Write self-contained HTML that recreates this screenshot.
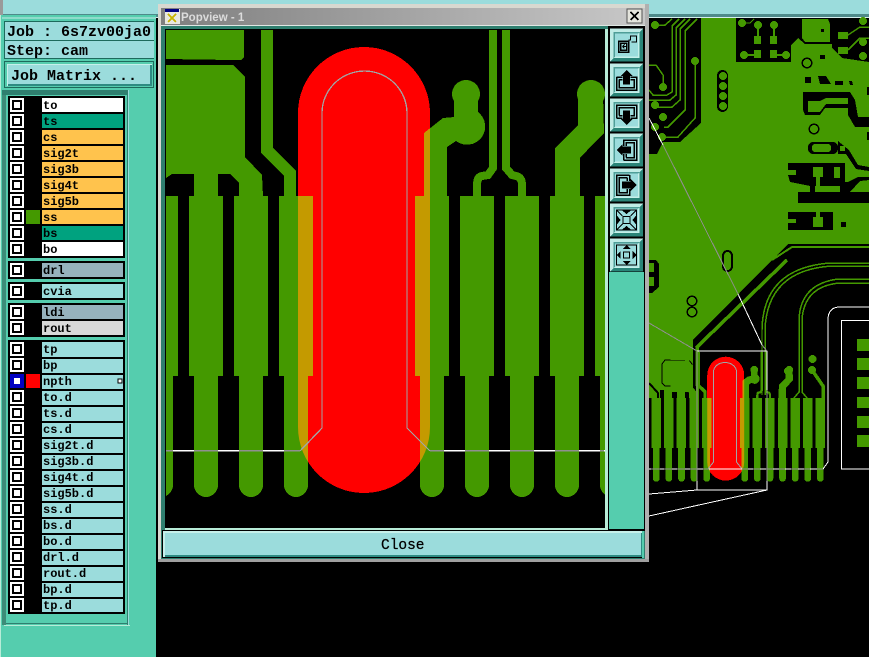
<!DOCTYPE html>
<html><head><meta charset="utf-8"><style>
html,body{margin:0;padding:0;background:#000;width:869px;height:657px;overflow:hidden}
svg{display:block}
text{font-family:"Liberation Mono",monospace;fill:#000}
.l{font-size:12px;font-weight:bold}
.h{font-size:15px;font-weight:bold}
</style></head><body>
<svg width="869" height="657" viewBox="0 0 869 657" xmlns="http://www.w3.org/2000/svg" shape-rendering="crispEdges">
<defs>
<g id="cb"><rect x="10" y="-7" width="14" height="14" fill="#fff"/><rect x="12" y="-5" width="10" height="10" fill="#000"/><rect x="14" y="-3" width="6" height="6" fill="#fff"/></g>
<path id="pad" d="M-17,196H17V376H12V485A12,12 0 0 1 -12,485V376H-17Z"/>
<g id="shapes">
<path d="M166,30H244V57L241,60H232L166,59Z"/>
<path d="M166,65H233L245,77V157L262,175L263,196H239V183L230,174H218V196H194V174H172L166,178Z"/>
<path d="M261,30H273V148L296,171V196H284V176L261,153Z"/>
<path d="M424,196V133L443,118L454,117V100H478V112A14,14 0 1 1 456,141L447,147V196Z"/>
<circle cx="466" cy="94" r="14"/>
<circle cx="591" cy="94" r="14"/>
<path d="M555,196V148L578,125V94H603L604,133L594,143L580,158V196Z"/>
</g>
<g id="tr" fill="none" stroke="currentColor" stroke-width="8">
<path d="M493,30V168L488,175L482,176Q477,177 477,185V196"/>
<path d="M506,30V168L512,175L516,176Q522,177 522,185V196"/>
</g>
<g id="pads">
<use href="#pad" x="116"/><use href="#pad" x="161"/><use href="#pad" x="206"/><use href="#pad" x="251"/><use href="#pad" x="296"/><use href="#pad" x="432"/><use href="#pad" x="477"/><use href="#pad" x="522"/><use href="#pad" x="567"/><use href="#pad" x="612"/><use href="#pad" x="657"/><use href="#pad" x="702"/>
</g>
<clipPath id="cap"><rect x="298" y="47" width="132" height="446" rx="66" ry="66"/></clipPath>
<clipPath id="cv"><rect x="166" y="30" width="439" height="497"/></clipPath>
<g id="scene">
<rect x="298" y="47" width="132" height="446" rx="66" ry="66" fill="#f00"/>
<g fill="#449900" color="#449900"><use href="#shapes"/><use href="#tr"/><use href="#pads"/></g>
<g clip-path="url(#cap)" fill="#c49a00"><use href="#shapes"/><use href="#pads"/></g>
</g>
<g id="arrowU">
<path d="M-10,-3H-4M4,-3H10V10H-10V-3M-7.5,-.5H-4M4,-.5H7.5V7.5H-7.5V-.5" fill="none" stroke="#000" stroke-width="1.5"/>
<path d="M0,-10L6,-4H3.5V4.5H-3.5V-4H-6Z" fill="#000"/>
</g>
<g id="btn">
<rect x="-16.5" y="-16.5" width="33" height="33" fill="#9bdcdc"/>
<path d="M-16.5,-16.5H16.5L13,-13H-13V13L-16.5,16.5Z" fill="#c0ece6"/>
<path d="M16.5,16.5H-16.5L-13,13H13V-13L16.5,-16.5Z" fill="#2a8478"/>
<path d="M-13,-13H13L11.5,-11.5H-11.5V11.5L-13,13Z" fill="#4f9e98"/>
<path d="M13,13H-13L-11.5,11.5H11.5V-11.5L13,-13Z" fill="#c6f0ea"/>
</g>
</defs>

<!-- background -->
<rect width="869" height="657" fill="#000"/>
<rect y="0" width="869" height="14" fill="#9bdcdc"/>
<rect y="14" width="869" height="3" fill="#4f8a8a"/>
<rect y="17" width="869" height="1" fill="#d4eeee"/>
<rect x="0" width="3" height="15" fill="#9a9a9a"/>

<!-- PCB background -->
<path d="M649,18H869V244H788L693,340V398H649Z" fill="#449900"/>
<path d="M649,18H701V123L680,142H663L657,154H649Z" fill="#000"/>
<g fill="none" stroke="#449900" stroke-width="1.5">
<path d="M697,19L685,31V110L668,127H664"/>
<path d="M690,19L680,29V100L672,107H655"/>
<path d="M685,19L676,28V95L670,100H649"/>
<path d="M679,19L672,26V92L667,95H653L649,90"/>
<path d="M649,65H656L663,75V87"/>
<path d="M695,61V118L678,137H662"/>
<path d="M655,25H665L672,19"/>
</g>
<g fill="#449900"><circle cx="655" cy="25" r="4"/><circle cx="695" cy="61" r="4"/><circle cx="663" cy="87" r="4"/><circle cx="655" cy="105" r="4"/><circle cx="663" cy="117" r="4"/><circle cx="655" cy="127" r="4"/><circle cx="662" cy="137" r="4"/></g>
<path d="M736,18H869V62L842,58L832,48V44H805L798,38L791,45V62H736Z" fill="#000"/>
<path d="M802,19H828L830,24V42H805L802,38Z" fill="#449900"/>
<rect x="821" y="29" width="3" height="3" fill="#000"/>
<rect x="820" y="55" width="5" height="4" fill="#000"/>
<g fill="#449900">
<circle cx="742" cy="23" r="4"/><path d="M742,23H750L754,19" stroke="#449900" fill="none"/>
<circle cx="758" cy="25" r="4"/><rect x="757" y="27" width="2" height="12"/><rect x="754" y="36" width="7" height="8"/>
<circle cx="774" cy="25" r="4"/><rect x="773" y="27" width="2" height="12"/><rect x="770" y="36" width="7" height="8"/>
<circle cx="744" cy="55" r="4"/><rect x="744" y="54" width="12" height="2"/><rect x="754" y="50" width="7" height="8"/>
<rect x="770" y="50" width="7" height="8"/><rect x="775" y="54" width="11" height="2"/><circle cx="786" cy="55" r="4"/>
<rect x="838" y="32" width="10" height="7"/><rect x="838" y="47" width="10" height="7"/>
<circle cx="863" cy="42" r="4"/><circle cx="863" cy="56" r="4"/><circle cx="863" cy="21" r="4"/>
</g>
<path d="M848,35L860,27H869M848,50L860,38L869,38" fill="none" stroke="#449900" stroke-width="1.5"/>
<circle cx="807" cy="63" r="5.5" fill="#000"/><circle cx="807" cy="63" r="4" fill="#449900"/>
<circle cx="814" cy="129" r="5.5" fill="#000"/><circle cx="814" cy="129" r="4" fill="#449900"/>
<rect x="717" y="70" width="11" height="42" rx="5.5" fill="#000"/>
<g fill="#449900"><circle cx="723" cy="76" r="4"/><circle cx="723" cy="86" r="4"/><circle cx="723" cy="96" r="4"/><circle cx="723" cy="106" r="4"/></g>
<!-- middle right dark -->
<path d="M805,77H811V83H805ZM818,76H826L831,84H820ZM835,81H843V85H835ZM849,81H852L853,85H850Z" fill="#000"/>
<path d="M803,92L850,92L855,100L858,117H869V127H855L848,115V108H825L820,115H805L803,110Z" fill="#000"/>
<path d="M808,101H820L826,98H848V104H826L820,112H808Z" fill="#449900"/>
<rect x="867" y="87" width="2" height="8" fill="#000"/><rect x="867" y="132" width="2" height="8" fill="#000"/>
<rect x="808" y="142" width="30" height="12" rx="5" fill="#000"/><rect x="812" y="144" width="19" height="8" rx="3" fill="#449900"/>
<path d="M838,141L849,150L858,165L869,167V171L856,169L846,154L838,154Z" fill="#000"/>
<rect x="840" y="146" width="5" height="5" fill="#449900"/>
<path d="M788,163H845V182H848L858,177L869,177V180L860,181L850,192H869V203H798V192H810V186L790,182L788,175Z" fill="#000"/>
<g fill="#449900"><rect x="813" y="167" width="10" height="10"/><rect x="816" y="176" width="4" height="12"/><rect x="834" y="167" width="6" height="11"/><rect x="815" y="186" width="25" height="6"/><rect x="788" y="170" width="8" height="5"/></g>
<path d="M788,212H833V230H788Z" fill="#000"/>
<g fill="#449900"><rect x="813" y="217" width="10" height="10"/><rect x="816" y="203" width="4" height="15"/><rect x="834" y="203" width="7" height="8"/><rect x="788" y="219" width="8" height="4"/><rect x="841" y="203" width="28" height="4"/></g>
<rect x="841" y="222" width="5" height="5" fill="#000"/>
<!-- diag trace and lower traces -->
<path d="M787,260L697,347V400" fill="none" stroke="#449900" stroke-width="3.5"/>
<path d="M869,247H792L772,260" fill="none" stroke="#449900" stroke-width="2"/>
<g fill="none" stroke="#449900" stroke-width="1.5">
<path d="M869,263H830Q763,268 762,330V395"/>
<path d="M869,266H832Q767,270 765,330V395"/>
<path d="M869,279H838Q800,284 799,320V392L794,398"/>
<path d="M869,283H840Q804,286 802,320V392L807,398"/>
</g>
<rect x="722" y="250" width="11" height="22" rx="5.5" fill="#000"/><rect x="724" y="252" width="7" height="18" rx="3.5" fill="#449900"/>
<g fill="#000"><circle cx="692" cy="301" r="5.5"/><circle cx="692" cy="312" r="5.5"/></g>
<g fill="#449900"><circle cx="692" cy="301" r="4"/><circle cx="692" cy="312" r="4"/></g>
<path d="M649,260H656L659,264V287L652,293L649,293Z" fill="#000"/>
<path d="M649,263H654V272H649ZM649,277H654V286H649Z" fill="#449900"/>
<path d="M665,360H689L692,364V386H665L662,383V364Z" fill="#449900" stroke="#000" stroke-width="1"/>
<path d="M649,383L658,393V398" fill="none" stroke="#000" stroke-width="2"/>
<path d="M660,390h4v8h-4zM672,390h5v8h-5zM685,390h4v8h-4zM693,386h3v12h-3z" fill="#000"/>
<rect x="857" y="339" width="12" height="12" fill="#449900"/><rect x="857" y="358" width="12" height="12" fill="#449900"/><rect x="857" y="377" width="12" height="12" fill="#449900"/><rect x="857" y="397" width="12" height="11" fill="#449900"/><rect x="857" y="416" width="12" height="12" fill="#449900"/><rect x="857" y="435" width="12" height="12" fill="#449900"/>
<!-- small view -->
<g transform="matrix(.28,0,0,.2778,623.8,343.64)"><use href="#scene"/></g>
<path d="M713.5,462V372A11.5,9.5 0 0 1 736.5,372V462L742,469M713.5,462L708,469" fill="none" stroke="#a0a6a6" stroke-width="1"/>
<circle cx="812.5" cy="359" r="4" fill="#449900"/>
<circle cx="812" cy="370" r="4" fill="#449900"/>
<path d="M812,370L823,386V398M788,371V380L780,390V398" fill="none" stroke="#449900" stroke-width="3.5"/>
<circle cx="788" cy="371" r="4" fill="#449900"/>
<!-- white overlays -->
<g fill="none" stroke="#fff" stroke-width="1">
<path d="M649,118L663,145"/>
<path d="M738,294L762,345"/>
<path d="M869,307H840Q828,307 828,320V462L823,469H649"/>
<path d="M869,320.5H841.5V469H869"/>
<path d="M697,351H767V490H697V351"/>
<path d="M649,494L697,490"/>
<path d="M649,516L767,490"/>
</g>
<g fill="none" stroke="#8f8f8f" stroke-width="1">
<path d="M663,145L738,294"/>
<path d="M762,345L767,351"/>
<path d="M649,323L697,351"/>
<path d="M697,351V481"/>
<path d="M767,390V481"/>
<path d="M651,469H660M664,469H672M677,469H685M690,469H697M703,469H709M742,469H748M753,469H760M766,469H773M779,469H785M791,469H798M804,469H810M817,469H823"/>
</g>

<!-- left panel -->
<rect x="0" y="15" width="156" height="642" fill="#55cdae"/>
<rect x="0" y="15" width="1" height="642" fill="#b8ecd8"/>
<rect x="2" y="17" width="154" height="2" fill="#8fdccb"/>
<rect x="4" y="21" width="150" height="38" fill="#1e6a5c"/>
<rect x="5" y="22" width="149" height="18" fill="#9bdcdc"/>
<rect x="5" y="41" width="149" height="17" fill="#9bdcdc"/>
<text class="h" x="7" y="36" textLength="144">Job : 6s7zv00ja0</text>
<text class="h" x="7" y="55">Step: cam</text>
<rect x="4" y="61" width="150" height="27" fill="#1e6a5c"/>
<rect x="5" y="62" width="148" height="25" fill="#55cdae"/>
<rect x="7" y="64" width="145" height="22" fill="#c6f0ea"/>
<rect x="8" y="65" width="144" height="21" fill="#2e8b82"/>
<rect x="8" y="65" width="142" height="19" fill="#9bdcdc"/>
<text class="h" x="11" y="80">Job Matrix ...</text>
<rect x="2" y="90" width="4" height="535" fill="#3d8c78"/>
<rect x="2" y="90" width="126" height="5" fill="#2f7f6f"/>
<rect x="6" y="95" width="122" height="529" fill="#55cdae"/>
<rect x="127" y="90" width="1" height="535" fill="#2f7f6f"/>
<rect x="128" y="90" width="1" height="535" fill="#9bdcdc"/>
<rect x="6" y="623" width="122" height="1" fill="#2f7f6f"/>
<rect x="4" y="625" width="126" height="1" fill="#b8ecd8"/>
<rect x="8" y="96" width="117" height="162" fill="#000"/>
<rect x="8" y="261" width="117" height="18" fill="#000"/>
<rect x="8" y="282" width="117" height="18" fill="#000"/>
<rect x="8" y="303" width="117" height="34" fill="#000"/>
<rect x="8" y="340" width="117" height="274" fill="#000"/>
<!-- rows -->
<g>
<rect x="42" y="98" width="81" height="14" fill="#fff"/><rect x="42" y="114" width="81" height="14" fill="#00a27f"/>
<rect x="42" y="130" width="81" height="14" fill="#ffc34d"/><rect x="42" y="146" width="81" height="14" fill="#ffc34d"/><rect x="42" y="162" width="81" height="14" fill="#ffc34d"/><rect x="42" y="178" width="81" height="14" fill="#ffc34d"/><rect x="42" y="194" width="81" height="14" fill="#ffc34d"/><rect x="42" y="210" width="81" height="14" fill="#ffc34d"/>
<rect x="42" y="226" width="81" height="14" fill="#00a27f"/><rect x="42" y="242" width="81" height="14" fill="#fff"/>
<rect x="42" y="263" width="81" height="14" fill="#96b2bd"/><rect x="42" y="284" width="81" height="14" fill="#9bdcdc"/>
<rect x="42" y="305" width="81" height="14" fill="#96b2bd"/><rect x="42" y="321" width="81" height="14" fill="#d8d8d8"/>
<rect x="42" y="342" width="81" height="270" fill="#9bdcdc"/>
<path d="M42,357h81v2h-81zM42,373h81v2h-81zM42,389h81v2h-81zM42,405h81v2h-81zM42,421h81v2h-81zM42,437h81v2h-81zM42,453h81v2h-81zM42,469h81v2h-81zM42,485h81v2h-81zM42,501h81v2h-81zM42,517h81v2h-81zM42,533h81v2h-81zM42,549h81v2h-81zM42,565h81v2h-81zM42,581h81v2h-81zM42,597h81v2h-81z" fill="#000"/>
<rect x="26" y="210" width="14" height="14" fill="#449900"/>
<rect x="26" y="374" width="14" height="14" fill="#f00"/>
</g>
<use href="#cb" y="105"/><use href="#cb" y="121"/><use href="#cb" y="137"/><use href="#cb" y="153"/><use href="#cb" y="169"/><use href="#cb" y="185"/><use href="#cb" y="201"/><use href="#cb" y="217"/><use href="#cb" y="233"/><use href="#cb" y="249"/>
<use href="#cb" y="270"/><use href="#cb" y="291"/><use href="#cb" y="312"/><use href="#cb" y="328"/>
<use href="#cb" y="349"/><use href="#cb" y="365"/><use href="#cb" y="381"/><use href="#cb" y="397"/><use href="#cb" y="413"/><use href="#cb" y="429"/><use href="#cb" y="445"/><use href="#cb" y="461"/><use href="#cb" y="477"/><use href="#cb" y="493"/><use href="#cb" y="509"/><use href="#cb" y="525"/><use href="#cb" y="541"/><use href="#cb" y="557"/><use href="#cb" y="573"/><use href="#cb" y="589"/><use href="#cb" y="605"/>
<rect x="10" y="374" width="14" height="14" fill="#0000c0"/><rect x="12" y="376" width="10" height="10" fill="#0000c0"/><rect x="14" y="378" width="6" height="6" fill="#fff"/>
<rect x="118" y="379" width="4" height="4" fill="#fff" stroke="#000" stroke-width="1"/>
<g class="x">
<text class="l" x="43" y="109">to</text><text class="l" x="43" y="125">ts</text><text class="l" x="43" y="141">cs</text><text class="l" x="43" y="157">sig2t</text><text class="l" x="43" y="173">sig3b</text><text class="l" x="43" y="189">sig4t</text><text class="l" x="43" y="205">sig5b</text><text class="l" x="43" y="221">ss</text><text class="l" x="43" y="237">bs</text><text class="l" x="43" y="253">bo</text>
<text class="l" x="43" y="274">drl</text><text class="l" x="43" y="295">cvia</text><text class="l" x="43" y="316">ldi</text><text class="l" x="43" y="332">rout</text>
<text class="l" x="43" y="353">tp</text><text class="l" x="43" y="369">bp</text><text class="l" x="43" y="385">npth</text><text class="l" x="43" y="401">to.d</text><text class="l" x="43" y="417">ts.d</text><text class="l" x="43" y="433">cs.d</text><text class="l" x="43" y="449">sig2t.d</text><text class="l" x="43" y="465">sig3b.d</text><text class="l" x="43" y="481">sig4t.d</text><text class="l" x="43" y="497">sig5b.d</text><text class="l" x="43" y="513">ss.d</text><text class="l" x="43" y="529">bs.d</text><text class="l" x="43" y="545">bo.d</text><text class="l" x="43" y="561">drl.d</text><text class="l" x="43" y="577">rout.d</text><text class="l" x="43" y="593">bp.d</text><text class="l" x="43" y="609">tp.d</text>
</g>

<!-- popup window -->
<rect x="158" y="4" width="491" height="558" fill="#d8d8d0"/>
<rect x="645" y="4" width="4" height="558" fill="#b0b0b0"/>
<rect x="158" y="559" width="491" height="3" fill="#a0a0a0"/>
<rect x="161" y="26" width="484" height="533" fill="#2f7f6f"/>
<defs><linearGradient id="tb" x1="0" x2="1" y1="0" y2="0"><stop offset="0" stop-color="#7f7f7f"/><stop offset="1" stop-color="#c8c8c8"/></linearGradient></defs>
<rect x="161" y="8" width="484" height="17" fill="url(#tb)"/>
<rect x="161" y="25" width="484" height="1" fill="#dfe8e4"/>
<rect x="165" y="9" width="15" height="15" fill="#e8e8e0"/><rect x="165" y="9" width="14" height="3" fill="#000080"/>
<path d="M168,14L176,22M176,14L168,22" stroke="#c8b400" stroke-width="2"/>
<text x="181" y="21" style="font-family:'Liberation Sans',sans-serif;font-size:11.5px;font-weight:bold;fill:#dcdcdc">Popview - 1</text>
<rect x="627" y="9" width="15" height="14" fill="#e4e4dc" stroke="#555" stroke-width="1"/>
<path d="M630.5,12L638.5,20M638.5,12L630.5,20" stroke="#000" stroke-width="1.6"/>

<rect x="165" y="29" width="444" height="502" fill="#b8ecd8"/>
<rect x="165" y="29" width="440" height="499" fill="#000"/>
<g clip-path="url(#cv)"><use href="#scene"/></g>
<path d="M322,428V113A42.5,42 0 0 1 407,113V428L430,451M322,428L300,451" fill="none" stroke="#a0a6a6" stroke-width="1.3"/>
<rect x="166" y="450" width="134" height="1.5" fill="#fff"/><rect x="430" y="450" width="175" height="1.5" fill="#fff"/>
<path d="M166,450h7v1.5h-7zM194,450h24v1.5h-24zM239,450h24v1.5h-24zM284,450h16v1.5h-16zM430,450h14v1.5h-14zM465,450h24v1.5h-24zM510,450h24v1.5h-24zM555,450h24v1.5h-24zM600,450h4v1.5h-4z" fill="#8f8f8f"/>

<!-- toolbar -->
<rect x="608" y="26" width="37" height="505" fill="#000"/>
<rect x="609" y="272" width="35" height="257" fill="#55cdae"/>
<g transform="translate(626.5,45)"><use href="#btn"/>
<path d="M-8,-4H2V7H-8ZM-6,-2H0V5H-6Z" fill="none" stroke="#000" stroke-width="1.5"/>
<path d="M-4,1.5H0M-4,1.5L-2,-.5M-4,1.5L-2,3.5" stroke="#000" fill="none"/>
<path d="M2,-5H4V-9H10V-3H5" fill="none" stroke="#000" stroke-width="1.2"/></g>
<g transform="translate(626.5,80)"><use href="#btn"/><use href="#arrowU"/></g>
<g transform="translate(626.5,115)"><use href="#btn"/><g transform="scale(1,-1)"><use href="#arrowU"/></g></g>
<g transform="translate(626.5,150)"><use href="#btn"/><g transform="rotate(-90)"><use href="#arrowU"/></g></g>
<g transform="translate(626.5,185)"><use href="#btn"/><g transform="rotate(90)"><use href="#arrowU"/></g></g>
<g transform="translate(626.5,220)"><use href="#btn"/>
<path d="M-10,-10H10V10H-10Z" fill="none" stroke="#000" stroke-width="1.3"/>
<path d="M-10,-10L-4,-4M10,-10L4,-4M-10,10L-4,4M10,10L4,4" stroke="#000"/>
<path d="M-5,-10H5L0,-6ZM-5,10H5L0,6ZM-10,-5V5L-6,0ZM10,-5V5L6,0Z" fill="#000"/>
<path d="M-3.5,-3.5H3.5V3.5H-3.5Z" fill="none" stroke="#000" stroke-width="1.4"/></g>
<g transform="translate(626.5,255)"><use href="#btn"/>
<path d="M-10,-10H10V10H-10Z" fill="none" stroke="#000" stroke-width="1.3"/>
<path d="M-4,-6H4L0,-10ZM-4,6H4L0,10ZM-6,-4V4L-10,0ZM6,-4V4L10,0Z" fill="#000"/>
<path d="M-3,-3H3V3H-3Z" fill="none" stroke="#000" stroke-width="1.2"/></g>

<!-- close button -->
<rect x="162" y="530" width="482" height="28" fill="#000"/>
<rect x="163" y="531" width="479" height="26" fill="#2e8b82"/>
<rect x="163" y="531" width="479" height="2" fill="#c6f0ea"/>
<rect x="163" y="531" width="2" height="26" fill="#c6f0ea"/>
<rect x="165" y="533" width="476" height="22" fill="#9bdcdc"/>
<rect x="642" y="531" width="2" height="27" fill="#55cdae"/>
<text x="381" y="549" style="font-size:14.5px;stroke:#000;stroke-width:.25">Close</text>
</svg>
</body></html>
